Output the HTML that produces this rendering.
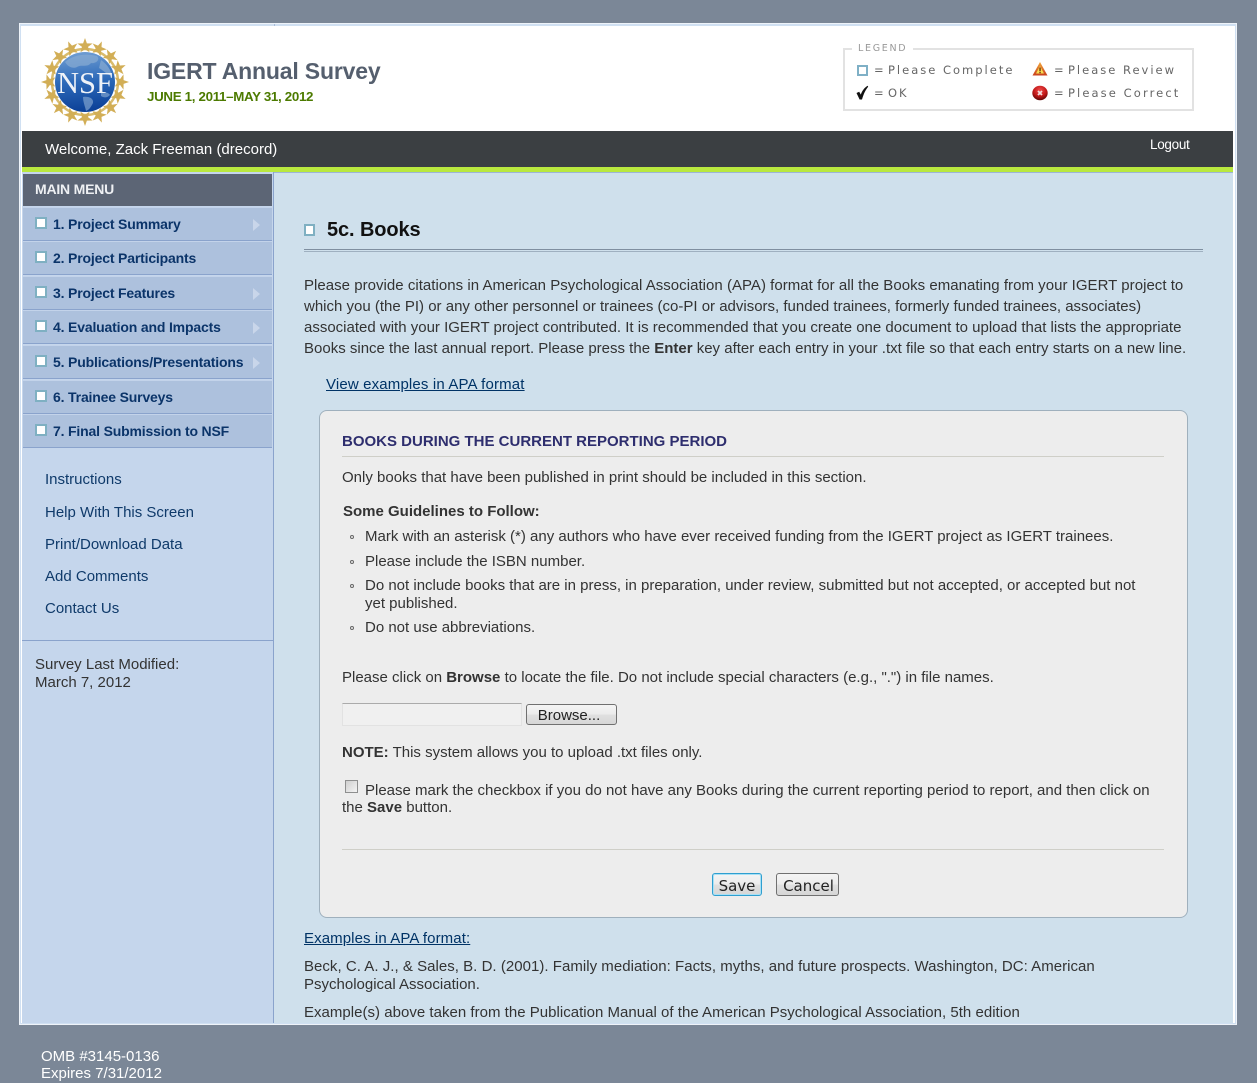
<!DOCTYPE html>
<html><head><meta charset="utf-8"><title>IGERT Annual Survey</title>
<style>
html,body{margin:0;padding:0;background:#7b8797;}
body{width:1257px;height:1083px;position:relative;overflow:hidden;font-family:"Liberation Sans",sans-serif;font-size:15px;color:#333;}
.a{position:absolute;white-space:nowrap;line-height:18px;margin-top:1px;}
.box{position:absolute;box-sizing:border-box;}
a{color:#003366;text-decoration:underline;}
.m{position:absolute;left:23px;width:249px;height:33px;background:#adc1dd;border-bottom:1px solid #8aa3cc;box-shadow:inset 0 1px 0 #c3d3ea;}
.m b{position:absolute;left:30px;top:8px;font-size:14px;letter-spacing:-.17px;line-height:18px;color:#0b3469;white-space:nowrap;}
.cb{position:absolute;left:12px;top:10px;width:8px;height:8px;background:#fff;border:2px solid #7fb0c2;box-sizing:content-box;}
.m i{position:absolute;left:230px;top:12px;width:0;height:0;border-left:7px solid #c9d6ea;border-top:6px solid transparent;border-bottom:6px solid transparent;}
.s{position:absolute;left:45px;color:#0f3a6a;line-height:18px;white-space:nowrap;margin-top:1px;}
.lg{position:absolute;font-family:"DejaVu Sans",sans-serif;font-size:11.5px;letter-spacing:2px;color:#666;line-height:14px;white-space:nowrap;}
.btn{position:absolute;box-sizing:border-box;border:1px solid #707070;border-radius:3px;background:linear-gradient(#f4f4f4 0,#ececec 48%,#e0e0e0 52%,#d6d6d6 100%);text-align:center;color:#222;white-space:nowrap;}
.dot{position:absolute;left:350px;width:4px;height:4px;box-sizing:border-box;border:1px solid #666;border-radius:50%;}
</style></head><body>

<div class="box" style="left:19px;top:23px;width:1218px;height:1002px;background:#eef3f9;"></div>
<div class="box" style="left:20px;top:24px;width:1216px;height:1000px;background:#fff;border:1px solid #d0e0f2;border-top-width:2px;"></div>
<div class="box" style="left:274px;top:24px;width:1px;height:2px;background:#a9bcd8;"></div>

<svg class="box" style="left:41px;top:38px;filter:blur(.35px)" width="88" height="88" viewBox="0 0 88 88">
<defs>
<linearGradient id="g" x1="0.4" y1="0" x2="0.5" y2="1"><stop offset="0" stop-color="#6f9dd2"/><stop offset=".5" stop-color="#2b68b8"/><stop offset="1" stop-color="#0b3f96"/></linearGradient>
<polygon id="st" points="0,-8 1.9,-2.6 7.6,-2.5 3,0.9 4.7,6.5 0,3.2 -4.7,6.5 -3,0.9 -7.6,-2.5 -1.9,-2.6" fill="#d2ae56"/>
</defs>
<circle cx="44" cy="44" r="33" fill="none" stroke="#d9bc6d" stroke-width="2.5"/>
<g transform="translate(44 44)">
<use href="#st" transform="rotate(0) translate(0 -36)"/><use href="#st" transform="rotate(22.5) translate(0 -36)"/>
<use href="#st" transform="rotate(45) translate(0 -36)"/><use href="#st" transform="rotate(67.5) translate(0 -36)"/>
<use href="#st" transform="rotate(90) translate(0 -36)"/><use href="#st" transform="rotate(112.5) translate(0 -36)"/>
<use href="#st" transform="rotate(135) translate(0 -36)"/><use href="#st" transform="rotate(157.5) translate(0 -36)"/>
<use href="#st" transform="rotate(180) translate(0 -36)"/><use href="#st" transform="rotate(202.5) translate(0 -36)"/>
<use href="#st" transform="rotate(225) translate(0 -36)"/><use href="#st" transform="rotate(247.5) translate(0 -36)"/>
<use href="#st" transform="rotate(270) translate(0 -36)"/><use href="#st" transform="rotate(292.5) translate(0 -36)"/>
<use href="#st" transform="rotate(315) translate(0 -36)"/><use href="#st" transform="rotate(337.5) translate(0 -36)"/>
</g>
<circle cx="44" cy="44" r="30.5" fill="#fff"/>
<circle cx="44" cy="44" r="30" fill="url(#g)"/>
<path d="M24 24 C32 17 44 15 56 18 C60 22 54 26 50 25 C46 30 40 26 36 29 C32 31 27 29 24 24Z M60 22 C66 26 70 32 71 38 C66 37 62 32 58 30Z" fill="#86a9d2" opacity=".75"/>
<path d="M42 59 C47 58 53 60 52 65 C50 69 48 72 45 73 C44 68 42 64 42 59Z M60 54 C65 54 68 55 69 57 C66 60 63 60 60 58Z" fill="#7fa3cf" opacity=".7"/>
<text x="44" y="55" text-anchor="middle" font-family="Liberation Serif,serif" font-size="31" fill="#eef2f8" textLength="56" lengthAdjust="spacingAndGlyphs">NSF</text>
</svg>

<div class="a" style="left:147px;top:56px;font-size:23px;line-height:28px;font-weight:bold;color:#555f6e;letter-spacing:-.18px;">IGERT Annual Survey</div>
<div class="a" style="left:147px;top:87px;font-size:13.33px;font-weight:bold;color:#4c7a00;letter-spacing:-.32px;">JUNE 1, 2011–MAY 31, 2012</div>

<div class="box" style="left:843px;top:48px;width:351px;height:63px;border:2px solid #e2e2e2;"></div>
<div class="lg" style="left:852px;top:42px;background:#fff;padding:0 6px;font-size:9.5px;letter-spacing:1.7px;color:#999;">LEGEND</div>
<div class="box" style="left:857px;top:65px;width:11px;height:11px;border:2px solid #7fb0c6;background:#fff;"></div>
<div class="lg" style="left:874px;top:63px;">=</div><div class="lg" style="left:888px;top:63px;">Please Complete</div>
<svg class="box" style="left:1032px;top:61px" width="16" height="15" viewBox="0 0 16 15"><defs><linearGradient id="w" x1="0" y1="0" x2="0" y2="1"><stop offset="0" stop-color="#f3a63b"/><stop offset="1" stop-color="#c8401c"/></linearGradient></defs><polygon points="8,1 15.5,14.5 .5,14.5" fill="url(#w)"/><polygon points="8,5 12,12.5 4,12.5" fill="#f7dc50"/><rect x="7.3" y="6.5" width="1.5" height="3.5" fill="#7a3a10"/><rect x="7.3" y="10.7" width="1.5" height="1.5" fill="#7a3a10"/></svg>
<div class="lg" style="left:1054px;top:63px;">=</div><div class="lg" style="left:1068px;top:63px;">Please Review</div>
<svg class="box" style="left:855px;top:84px" width="16" height="17" viewBox="0 0 16 17"><path d="M1.5 9 L4.2 7.8 L5.8 10.6 C7.2 6.6 9.6 3.6 12.6 1.8 L13.2 2.8 C10.6 5.8 8.6 10 7 15.5 L4.6 15.5 Z" fill="#111"/></svg>
<div class="lg" style="left:874px;top:86px;">=</div><div class="lg" style="left:888px;top:86px;">OK</div>
<svg class="box" style="left:1032px;top:85px" width="16" height="16" viewBox="0 0 16 16"><defs><radialGradient id="r" cx="50%" cy="30%" r="70%"><stop offset="0" stop-color="#f04a4a"/><stop offset=".6" stop-color="#c01818"/><stop offset="1" stop-color="#5e0606"/></radialGradient></defs><ellipse cx="8" cy="8" rx="7.7" ry="7.2" fill="url(#r)"/><path d="M6 6 L10 10 M10 6 L6 10" stroke="#f4dede" stroke-width="1.8"/></svg>
<div class="lg" style="left:1054px;top:86px;">=</div><div class="lg" style="left:1068px;top:86px;letter-spacing:2.1px;">Please Correct</div>

<div class="box" style="left:22px;top:131px;width:1211px;height:36px;background:#3b3f42;"></div>
<div class="box" style="left:22px;top:167px;width:1211px;height:5px;background:#b9e83f;"></div>
<div class="a" style="left:45px;top:140px;color:#fff;">Welcome, Zack Freeman (drecord)</div>
<div class="a" style="left:1150px;top:135px;color:#fff;font-size:13.5px;letter-spacing:-.3px;">Logout</div>

<div class="box" style="left:22px;top:172px;width:252px;height:851px;background:#c5d6ec;border-right:1px solid #8aa3cc;"></div>
<div class="box" style="left:274px;top:172px;width:959px;height:851px;background:#cfe0ec;border-top:1px solid #9db5d6;"></div>

<div class="box" style="left:23px;top:174px;width:249px;height:32px;background:#5c6575;"></div>
<div class="a" style="left:35px;top:179px;font-size:14px;font-weight:bold;color:#eef0f3;letter-spacing:-.2px;">MAIN MENU</div>

<div class="m" style="top:207px"><span class="cb"></span><b>1. Project Summary</b><i></i></div>
<div class="m" style="top:241px"><span class="cb"></span><b>2. Project Participants</b></div>
<div class="m" style="top:276px"><span class="cb"></span><b>3. Project Features</b><i></i></div>
<div class="m" style="top:310px"><span class="cb"></span><b>4. Evaluation and Impacts</b><i></i></div>
<div class="m" style="top:345px"><span class="cb"></span><b>5. Publications/Presentations</b><i></i></div>
<div class="m" style="top:380px"><span class="cb"></span><b>6. Trainee Surveys</b></div>
<div class="m" style="top:414px"><span class="cb"></span><b>7. Final Submission to NSF</b></div>

<div class="s" style="top:470px">Instructions</div>
<div class="s" style="top:503px">Help With This Screen</div>
<div class="s" style="top:535px">Print/Download Data</div>
<div class="s" style="top:567px">Add Comments</div>
<div class="s" style="top:599px">Contact Us</div>
<div class="box" style="left:22px;top:640px;width:251px;height:1px;background:#8aa3cc;"></div>
<div class="a" style="left:35px;top:655px;">Survey Last Modified:</div>
<div class="a" style="left:35px;top:673px;">March 7, 2012</div>

<div class="box" style="left:304px;top:224px;width:11px;height:12px;background:#fff;border:2px solid #7fb0c2;"></div>
<div class="a" style="left:327px;top:217px;font-size:20px;line-height:24px;font-weight:bold;color:#111;letter-spacing:-.1px;">5c. Books</div>
<div class="box" style="left:304px;top:249px;width:899px;height:3px;border-top:1px solid #7f8fa0;border-bottom:1px solid #9fb0c0;"></div>

<div class="a" style="left:304px;top:276px;letter-spacing:.03px;">Please provide citations in American Psychological Association (APA) format for all the Books emanating from your IGERT project to</div>
<div class="a" style="left:304px;top:297px;">which you (the PI) or any other personnel or trainees (co-PI or advisors, funded trainees, formerly funded trainees, associates)</div>
<div class="a" style="left:304px;top:318px;">associated with your IGERT project contributed. It is recommended that you create one document to upload that lists the appropriate</div>
<div class="a" style="left:304px;top:339px;">Books since the last annual report. Please press the <b>Enter</b> key after each entry in your .txt file so that each entry starts on a new line.</div>
<div class="a" style="left:326px;top:375px;letter-spacing:.15px;"><a>View examples in APA format</a></div>

<div class="box" style="left:319px;top:410px;width:869px;height:508px;background:#ededed;border:1px solid #9fb0bd;border-radius:8px;"></div>
<div class="a" style="left:342px;top:432px;font-weight:bold;color:#2e2e6e;">BOOKS DURING THE CURRENT REPORTING PERIOD</div>
<div class="box" style="left:342px;top:456px;width:822px;height:1px;background:#cfcfc8;"></div>
<div class="a" style="left:342px;top:468px;">Only books that have been published in print should be included in this section.</div>
<div class="a" style="left:343px;top:502px;font-weight:bold;">Some Guidelines to Follow:</div>
<div class="dot" style="top:535px"></div>
<div class="a" style="left:365px;top:527px;">Mark with an asterisk (*) any authors who have ever received funding from the IGERT project as IGERT trainees.</div>
<div class="dot" style="top:560px"></div>
<div class="a" style="left:365px;top:552px;">Please include the ISBN number.</div>
<div class="dot" style="top:584px"></div>
<div class="a" style="left:365px;top:576px;">Do not include books that are in press, in preparation, under review, submitted but not accepted, or accepted but not</div>
<div class="a" style="left:365px;top:594px;">yet published.</div>
<div class="dot" style="top:626px"></div>
<div class="a" style="left:365px;top:618px;">Do not use abbreviations.</div>
<div class="a" style="left:342px;top:668px;">Please click on <b>Browse</b> to locate the file. Do not include special characters (e.g., ".") in file names.</div>

<div class="box" style="left:342px;top:703px;width:180px;height:23px;background:#f0f0f0;border:1px solid #e2e2e2;border-top-color:#ababab;"></div>
<div class="btn" style="left:526px;top:704px;width:91px;height:21px;line-height:21px;padding-right:5px;">Browse...</div>

<div class="a" style="left:342px;top:743px;"><b>NOTE:</b> This system allows you to upload .txt files only.</div>

<div class="box" style="left:345px;top:780px;width:13px;height:13px;background:linear-gradient(135deg,#cfcfcf,#f4f4f4);border:1px solid #8e8f8f;"></div>
<div class="a" style="left:365px;top:781px;">Please mark the checkbox if you do not have any Books during the current reporting period to report, and then click on</div>
<div class="a" style="left:342px;top:798px;">the <b>Save</b> button.</div>
<div class="box" style="left:342px;top:849px;width:822px;height:1px;background:#cfcfc8;"></div>

<div class="btn" style="left:712px;top:873px;width:50px;height:23px;line-height:24px;border-color:#2f9fd0;box-shadow:inset 0 0 0 1px #a8e0f5;font-family:'DejaVu Sans',sans-serif;font-size:15px;">Save</div>
<div class="btn" style="left:776px;top:873px;width:63px;height:23px;line-height:24px;padding-left:2px;font-family:'DejaVu Sans',sans-serif;font-size:15px;">Cancel</div>

<div class="a" style="left:304px;top:929px;letter-spacing:.1px;"><a>Examples in APA format:</a></div>
<div class="a" style="left:304px;top:957px;letter-spacing:.03px;">Beck, C. A. J., &amp; Sales, B. D. (2001). Family mediation: Facts, myths, and future prospects. Washington, DC: American</div>
<div class="a" style="left:304px;top:975px;">Psychological Association.</div>
<div class="a" style="left:304px;top:1003px;letter-spacing:.02px;">Example(s) above taken from the Publication Manual of the American Psychological Association, 5th edition</div>

<div class="a" style="left:41px;top:1047px;color:#fff;">OMB #3145-0136</div>
<div class="a" style="left:41px;top:1064px;color:#fff;">Expires 7/31/2012</div>
</body></html>
